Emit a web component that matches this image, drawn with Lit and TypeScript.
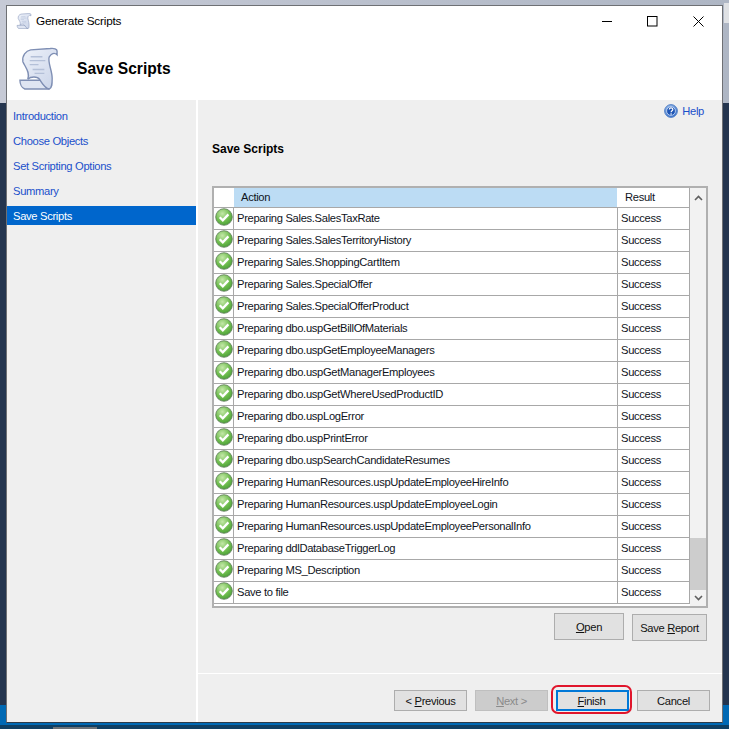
import { LitElement, html, css, svg } from "lit";
import { customElement } from "lit/decorators.js";

const ROWS = [
  "Preparing Sales.SalesTaxRate",
  "Preparing Sales.SalesTerritoryHistory",
  "Preparing Sales.ShoppingCartItem",
  "Preparing Sales.SpecialOffer",
  "Preparing Sales.SpecialOfferProduct",
  "Preparing dbo.uspGetBillOfMaterials",
  "Preparing dbo.uspGetEmployeeManagers",
  "Preparing dbo.uspGetManagerEmployees",
  "Preparing dbo.uspGetWhereUsedProductID",
  "Preparing dbo.uspLogError",
  "Preparing dbo.uspPrintError",
  "Preparing dbo.uspSearchCandidateResumes",
  "Preparing HumanResources.uspUpdateEmployeeHireInfo",
  "Preparing HumanResources.uspUpdateEmployeeLogin",
  "Preparing HumanResources.uspUpdateEmployeePersonalInfo",
  "Preparing ddlDatabaseTriggerLog",
  "Preparing MS_Description",
  "Save to file",
];

const NAV = ["Introduction", "Choose Objects", "Set Scripting Options", "Summary", "Save Scripts"];

const scroll = (size: number) => svg`
  <svg width=${size} height=${size} viewBox="0 0 44 44" aria-hidden="true">
    <path d="M3 34 L14 34 L24 34 C27 38 29 42 33 43 L8 43 C5 42 3 38 3 34 Z" fill="#dfe5f2" stroke="#7f8fb4" stroke-width="1.4"/>
    <path d="M14 3 L34 1.5 C38 1 41 2 41 4 L41 8 C38 5 35 7 33 10 C31 15 36 24 36 32 C36 38 36 42 33 43 C28 42 26 37 23 33 C21 30 14 30 11 33 C14 26 8 20 6 15 C5 9 9 4 14 3 Z" fill="url(#sg)" stroke="#7f8fb4" stroke-width="1.4"/>
    <path d="M14 10h12M13 14h16M13 18h9M16 23h12M18 27h10" stroke="#b4c0d8" stroke-width="1.4" fill="none"/>
  </svg>`;

const okIcon = svg`
  <svg class="ok" width="18" height="18" viewBox="0 0 18 18" aria-hidden="true">
    <circle cx="9" cy="9" r="8.3" fill="url(#okg)" stroke="#5d7a58" stroke-width=".8"/>
    <path d="M4.7 9.2 L7.8 12.3 L13.4 6.4" fill="none" stroke="#fff" stroke-width="2.3"/>
  </svg>`;

@customElement("app-root")
export class AppRoot extends LitElement {
  static styles = css`
    :host {
      display: block;
      position: relative;
      width: 729px;
      height: 729px;
      overflow: hidden;
      font-family: "Liberation Sans", Arial, sans-serif;
      font-size: 11.2px;
      letter-spacing: -0.32px;
      color: #111;
    }
    .desk { display: flex; flex-direction: column; height: 729px; position: relative; }
    .d1 { height: 103px; background: linear-gradient(90deg, #c6cad6, #aeb6c4); }
    .d2 { height: 602px; background: #24354f; }
    .d3 { height: 20px; background: #0069b4; }
    .d4 { height: 4px; background: #0e3f63; }
    .task { position: absolute; left: 53px; bottom: 0; width: 44px; height: 2px; background: #6d7378; }
    .tab { position: absolute; right: 0; top: 3px; width: 5px; height: 20px; background: #dfe1e4; }
    .window {
      position: absolute;
      left: 6px;
      top: 5px;
      width: 715px;
      height: 716px;
      border: 1px solid #6e7074;
      border-bottom-color: #2c3a48;
      background: #fff;
      display: flex;
      flex-direction: column;
    }
    .title {
      height: 30px;
      display: flex;
      align-items: center;
      padding-left: 9px;
      color: #000;
      flex: none;
    }
    .title span { margin-left: 4px; font-size: 11.8px; letter-spacing: -0.2px; }
    .controls { margin-left: auto; display: flex; align-items: center; padding-right: 18px; gap: 35px; }
    .head {
      height: 64px;
      flex: none;
      display: flex;
      align-items: center;
      padding-left: 11px;
    }
    .head svg { margin-left: -1px; }
    .head h1 { margin: 2px 0 0 17px; font-size: 15.6px; font-weight: 700; color: #000; letter-spacing: 0; }
    .body { flex: 1; display: flex; min-height: 0; gap: 2px; background: #fff; }
    nav { width: 189px; background: #efefef; padding-top: 6px; flex: none; }
    .nav-item {
      height: 19px;
      line-height: 21px;
      margin-bottom: 6px;
      padding-left: 6px;
      color: #1a4fcb;
    }
    .nav-item.sel { background: #0066cc; color: #fff; }
    .panel { flex: 1; background: #efefef; display: flex; flex-direction: column; min-width: 0; }
    .main { height: 573px; padding: 3px 14px 0; flex: none; display: flex; flex-direction: column; box-sizing: border-box; }
    .help { display: flex; justify-content: flex-end; align-items: center; gap: 4px; height: 15px; padding-right: 4px; color: #1a4fcb; }
    .section { margin: 24px 0 0; font-size: 12px; font-weight: 700; color: #000; height: 14px; line-height: 14px; letter-spacing: 0; }
    .table {
      margin-top: 30px;
      height: 422px;
      box-sizing: border-box;
      border: 2px solid #b0b0b0;
      background: #fff;
      display: flex;
    }
    .grid { width: 476px; flex: none; }
    .row {
      display: grid;
      grid-template-columns: 20px 384px 72px;
      height: 22px;
      box-sizing: border-box;
      border-bottom: 1px solid #a8a8a8;
    }
    .row > div { border-right: 1px solid #a8a8a8; line-height: 21px; white-space: nowrap; overflow: hidden; padding-left: 3px; color: #10141c; }
    .row > .ic { padding: 0; display: flex; justify-content: center; align-items: flex-start; }
    .hdr { height: 20px; }
    .hdr > div { line-height: 19px; padding-left: 7px; border-right: none; }
    .hdr > .ic { background: #fff; }
    .hdr > .act { background: #bcdcf4; border-right: 1px solid #fff; }
    .hdr > .res { border-right: 1px solid #a8a8a8; }
    .sb { width: 16px; flex: none; display: flex; flex-direction: column; align-items: center; background: #f2f2f2; }
    .sb svg { flex: none; }
    .sb-track { flex: 1; width: 100%; display: flex; flex-direction: column; justify-content: flex-end; }
    .sb-thumb { height: 52px; background: #cdcdcd; }
    .sb-up { height: 20px; display: flex; align-items: center; justify-content: center; }
    .sb-down { height: 16px; display: flex; align-items: center; justify-content: center; }
    .actions { display: flex; justify-content: flex-end; gap: 8px; margin-top: 5px; padding-right: 1px; align-items: flex-start; }
    button {
      font: inherit;
      letter-spacing: inherit;
      color: #111;
      background: #e1e1e1;
      border: 1.5px solid #adadad;
      box-sizing: border-box;
      padding: 0;
      margin: 0;
      border-radius: 0;
    }
    .b-open { width: 70px; height: 27px; }
    .b-save { width: 75px; height: 27px; margin-top: 1px; }
    .sep { height: 1px; background: #fff; flex: none; }
    .foot { flex: 1; display: flex; justify-content: flex-end; gap: 8px; padding: 16px 12px 0 0; align-items: flex-start; }
    .foot button { width: 73px; height: 21px; }
    .foot button.dis { background: #cccccc; border-color: #bfbfbf; color: #8a8a8a; }
    .foot button.def { border: 2px solid #0078d7; padding-right: 2px; }
    .finish-wrap { position: relative; display: block; height: 21px; }
    .ring {
      position: absolute;
      left: -5px; top: -5px; right: -3px; bottom: -3px;
      border: 2px solid #e0152b;
      border-radius: 7px;
      pointer-events: none;
    }
  `;

  render() {
    return html`
      <div class="desk">
        <div class="d1"></div><div class="d2"></div><div class="d3"></div><div class="d4"></div>
        <div class="task"></div>
        <div class="tab"></div>
      </div>
      <svg width="0" height="0" style="position:absolute" aria-hidden="true">
        <defs>
          <linearGradient id="sg" x1="0" y1="0" x2="1" y2="1">
            <stop offset="0" stop-color="#eef2fa"/><stop offset="1" stop-color="#c9d3e8"/>
          </linearGradient>
          <radialGradient id="okg" cx=".4" cy=".3" r=".85">
            <stop offset="0" stop-color="#c4e8a8"/>
            <stop offset=".55" stop-color="#6cbb4c"/>
            <stop offset="1" stop-color="#3c9231"/>
          </radialGradient>
          <radialGradient id="hg" cx=".4" cy=".3" r=".85">
            <stop offset="0" stop-color="#a8c8f0"/>
            <stop offset="1" stop-color="#1f5cc0"/>
          </radialGradient>
        </defs>
      </svg>
      <div class="window">
        <div class="title">
          ${scroll(16)}
          <span>Generate Scripts</span>
          <div class="controls">
            <svg width="10" height="10" viewBox="0 0 10 10" aria-hidden="true"><path d="M0 5.5h10" stroke="#000"/></svg>
            <svg width="11" height="11" viewBox="0 0 11 11" aria-hidden="true"><rect x=".5" y=".5" width="9.5" height="9.5" fill="none" stroke="#000"/></svg>
            <svg width="11" height="11" viewBox="0 0 11 11" aria-hidden="true"><path d="M.5.5l10 10M10.5.5l-10 10" stroke="#000" fill="none"/></svg>
          </div>
        </div>
        <div class="head">
          ${scroll(43)}
          <h1>Save Scripts</h1>
        </div>
        <div class="body">
          <nav>
            ${NAV.map((n, i) => html`<div class="nav-item ${i === 4 ? "sel" : ""}">${n}</div>`)}
          </nav>
          <div class="panel">
            <div class="main">
              <div class="help">
                <svg width="14" height="14" viewBox="0 0 14 14" aria-hidden="true">
                  <circle cx="7" cy="7" r="6.4" fill="url(#hg)" stroke="#5a86c8" stroke-width="1"/>
                  <circle cx="7" cy="7" r="4.4" fill="#1d54b4" stroke="#dbe8fa" stroke-width=".7"/>
                  <path d="M5.3 5.6c0-2.2 3.5-2.2 3.5-.2 0 1.3-1.7 1.3-1.7 2.8" stroke="#fff" stroke-width="1.2" fill="none"/>
                  <circle cx="7.1" cy="10" r=".8" fill="#fff"/>
                </svg>
                <span>Help</span>
              </div>
              <h2 class="section">Save Scripts</h2>
              <div class="table">
                <div class="grid">
                  <div class="row hdr"><div class="ic"></div><div class="act">Action</div><div class="res">Result</div></div>
                  ${ROWS.map(
                    (r) => html`<div class="row"><div class="ic">${okIcon}</div><div>${r}</div><div>Success</div></div>`
                  )}
                </div>
                <div class="sb">
                  <div class="sb-up">
                    <svg width="9" height="6" viewBox="0 0 9 6" aria-hidden="true"><path d="M1 5l3.5-3.5L8 5" fill="none" stroke="#606060" stroke-width="1.6"/></svg>
                  </div>
                  <div class="sb-track"><div class="sb-thumb"></div></div>
                  <div class="sb-down">
                    <svg width="9" height="6" viewBox="0 0 9 6" aria-hidden="true"><path d="M1 1l3.5 3.5L8 1" fill="none" stroke="#606060" stroke-width="1.6"/></svg>
                  </div>
                </div>
              </div>
              <div class="actions">
                <button class="b-open"><u>O</u>pen</button>
                <button class="b-save">Save <u>R</u>eport</button>
              </div>
            </div>
            <div class="sep"></div>
            <div class="foot">
              <button>&lt; <u>P</u>revious</button>
              <button class="dis"><u>N</u>ext &gt;</button>
              <span class="finish-wrap"><button class="def"><u>F</u>inish</button><span class="ring"></span></span>
              <button>Cancel</button>
            </div>
          </div>
        </div>
      </div>
    `;
  }
}
